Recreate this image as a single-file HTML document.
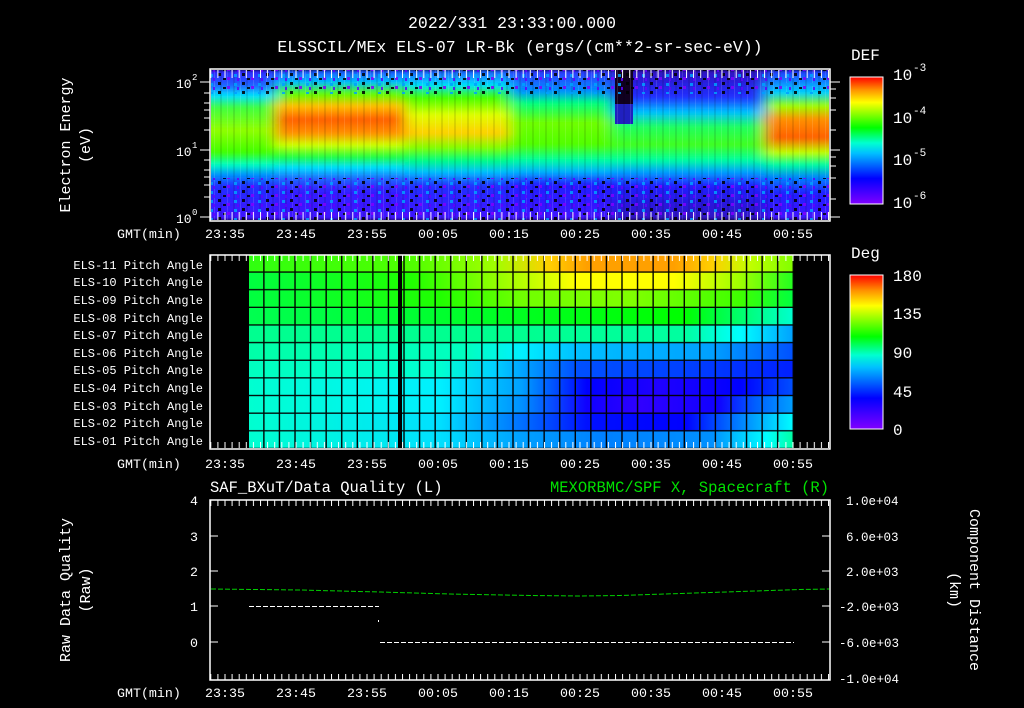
<!DOCTYPE html>
<html><head><meta charset="utf-8"><style>
html,body{margin:0;padding:0;background:#000;width:1024px;height:708px;overflow:hidden}
svg text{font-family:"Liberation Mono",monospace;fill:#fff}
</style></head><body>
<svg width="1024" height="708" viewBox="0 0 1024 708" xmlns="http://www.w3.org/2000/svg">
<defs>
<linearGradient id="cmap" x1="0" y1="1" x2="0" y2="0">
<stop offset="0" stop-color="#8000ff"/><stop offset="0.2" stop-color="#0000ff"/><stop offset="0.4" stop-color="#00c0ff"/><stop offset="0.48" stop-color="#00ffd0"/><stop offset="0.6" stop-color="#00ff00"/><stop offset="0.8" stop-color="#ffff00"/><stop offset="0.9" stop-color="#ff9000"/><stop offset="1" stop-color="#ff0000"/>
</linearGradient>
<linearGradient id="gA" x1="0" y1="0" x2="0" y2="1">
<stop offset="0" stop-color="#3020ff"/><stop offset="0.1" stop-color="#2060ff"/><stop offset="0.17" stop-color="#00e0ff"/><stop offset="0.25" stop-color="#40ff40"/><stop offset="0.4" stop-color="#90ff00"/><stop offset="0.55" stop-color="#40ff00"/><stop offset="0.63" stop-color="#00ffc0"/><stop offset="0.7" stop-color="#0090ff"/><stop offset="0.77" stop-color="#2030ff"/><stop offset="1" stop-color="#4010ff"/>
</linearGradient>
<linearGradient id="gB" x1="0" y1="0" x2="0" y2="1">
<stop offset="0" stop-color="#2040ff"/><stop offset="0.08" stop-color="#00c0ff"/><stop offset="0.16" stop-color="#60ff00"/><stop offset="0.24" stop-color="#ffc000"/><stop offset="0.33" stop-color="#ff6000"/><stop offset="0.42" stop-color="#ff9000"/><stop offset="0.5" stop-color="#d0ff00"/><stop offset="0.58" stop-color="#20ff40"/><stop offset="0.65" stop-color="#00e0ff"/><stop offset="0.73" stop-color="#2060ff"/><stop offset="0.8" stop-color="#3020ff"/><stop offset="1" stop-color="#4010ff"/>
</linearGradient>
<linearGradient id="gC" x1="0" y1="0" x2="0" y2="1">
<stop offset="0" stop-color="#2050ff"/><stop offset="0.1" stop-color="#00e0ff"/><stop offset="0.18" stop-color="#40ff00"/><stop offset="0.3" stop-color="#e0ff00"/><stop offset="0.42" stop-color="#ffd000"/><stop offset="0.52" stop-color="#80ff00"/><stop offset="0.6" stop-color="#00ff80"/><stop offset="0.68" stop-color="#00c0ff"/><stop offset="0.77" stop-color="#2030ff"/><stop offset="1" stop-color="#4010ff"/>
</linearGradient>
<linearGradient id="gD" x1="0" y1="0" x2="0" y2="1">
<stop offset="0" stop-color="#3030ff"/><stop offset="0.14" stop-color="#0090ff"/><stop offset="0.22" stop-color="#00ff80"/><stop offset="0.35" stop-color="#70ff00"/><stop offset="0.5" stop-color="#50ff00"/><stop offset="0.6" stop-color="#00ffa0"/><stop offset="0.68" stop-color="#00b0ff"/><stop offset="0.76" stop-color="#2020ff"/><stop offset="1" stop-color="#4010ff"/>
</linearGradient>
<linearGradient id="gE" x1="0" y1="0" x2="0" y2="1">
<stop offset="0" stop-color="#3010c0"/><stop offset="0.18" stop-color="#2030ff"/><stop offset="0.28" stop-color="#00c0ff"/><stop offset="0.38" stop-color="#20ff60"/><stop offset="0.5" stop-color="#40ff20"/><stop offset="0.6" stop-color="#00ffa0"/><stop offset="0.68" stop-color="#00a0ff"/><stop offset="0.77" stop-color="#2020ff"/><stop offset="1" stop-color="#3010c0"/>
</linearGradient>
<linearGradient id="gF" x1="0" y1="0" x2="0" y2="1">
<stop offset="0" stop-color="#2030ff"/><stop offset="0.15" stop-color="#00d0ff"/><stop offset="0.24" stop-color="#a0ff00"/><stop offset="0.33" stop-color="#ff9000"/><stop offset="0.45" stop-color="#ff6000"/><stop offset="0.55" stop-color="#c0ff00"/><stop offset="0.63" stop-color="#00ffa0"/><stop offset="0.72" stop-color="#0080ff"/><stop offset="0.82" stop-color="#2020ff"/><stop offset="1" stop-color="#4010ff"/>
</linearGradient>
<pattern id="noise" width="24" height="9" patternUnits="userSpaceOnUse">
<rect x="2" y="1" width="3" height="3" fill="#000"/><rect x="11" y="5" width="3" height="3" fill="#8000ff"/><rect x="18" y="2" width="3" height="3" fill="#00a0ff"/><rect x="7" y="6" width="3" height="2" fill="#000"/><rect x="21" y="6" width="2" height="3" fill="#6000ff"/>
</pattern>
<pattern id="streak" width="13" height="150" patternUnits="userSpaceOnUse" x="211" y="70">
<rect x="3" y="0" width="1" height="150" fill="#fff" opacity="0.12"/><rect x="9" y="0" width="2" height="150" fill="#000" opacity="0.1"/>
</pattern>
<filter id="bl" x="0" y="0" width="1" height="1"><feGaussianBlur stdDeviation="7 1.5"/></filter>
<clipPath id="cp1"><rect x="211" y="70" width="618" height="150"/></clipPath>
<pattern id="vlines" width="15.57" height="10" patternUnits="userSpaceOnUse" x="249">
<rect x="14.2" y="0" width="1.4" height="10" fill="#000"/>
</pattern>
<pattern id="hlines" width="10" height="17.64" patternUnits="userSpaceOnUse" y="255">
<rect x="0" y="16.4" width="10" height="1.3" fill="#000"/>
</pattern>
<pattern id="mt" width="7.1" height="10" patternUnits="userSpaceOnUse" x="224.5"><rect x="0" y="0" width="1" height="10" fill="#fff"/></pattern>
<linearGradient id="r11"><stop offset="0" stop-color="#30ff10"/><stop offset="0.3" stop-color="#50ff00"/><stop offset="0.45" stop-color="#a0ff00"/><stop offset="0.55" stop-color="#ffd000"/><stop offset="0.62" stop-color="#ffa000"/><stop offset="0.78" stop-color="#ffa000"/><stop offset="0.85" stop-color="#ffd000"/><stop offset="0.92" stop-color="#c0ff00"/><stop offset="1" stop-color="#80ff00"/></linearGradient>
<linearGradient id="r10"><stop offset="0" stop-color="#00ff40"/><stop offset="0.3" stop-color="#20ff00"/><stop offset="0.45" stop-color="#90ff00"/><stop offset="0.6" stop-color="#ffff00"/><stop offset="0.78" stop-color="#ffff00"/><stop offset="0.9" stop-color="#a0ff00"/><stop offset="1" stop-color="#20ff20"/></linearGradient>
<linearGradient id="r9"><stop offset="0" stop-color="#00ff40"/><stop offset="0.35" stop-color="#20ff00"/><stop offset="0.5" stop-color="#70ff00"/><stop offset="0.7" stop-color="#80ff00"/><stop offset="0.9" stop-color="#40ff00"/><stop offset="1" stop-color="#00ff40"/></linearGradient>
<linearGradient id="r8"><stop offset="0" stop-color="#00ff50"/><stop offset="0.5" stop-color="#00ff20"/><stop offset="0.8" stop-color="#00ff00"/><stop offset="0.92" stop-color="#00ff80"/><stop offset="1" stop-color="#00ffd0"/></linearGradient>
<linearGradient id="r7"><stop offset="0" stop-color="#00ff90"/><stop offset="0.5" stop-color="#00ff90"/><stop offset="0.8" stop-color="#00ffa0"/><stop offset="0.9" stop-color="#00ffff"/><stop offset="1" stop-color="#00a0ff"/></linearGradient>
<linearGradient id="r6"><stop offset="0" stop-color="#00ffa8"/><stop offset="0.4" stop-color="#00ffc0"/><stop offset="0.5" stop-color="#00f0ff"/><stop offset="0.6" stop-color="#00c0ff"/><stop offset="0.85" stop-color="#00a0ff"/><stop offset="1" stop-color="#0050ff"/></linearGradient>
<linearGradient id="r5"><stop offset="0" stop-color="#00ffc0"/><stop offset="0.35" stop-color="#00ffd0"/><stop offset="0.45" stop-color="#00d0ff"/><stop offset="0.6" stop-color="#0050ff"/><stop offset="0.8" stop-color="#0040ff"/><stop offset="1" stop-color="#0020ff"/></linearGradient>
<linearGradient id="r4"><stop offset="0" stop-color="#00ffd0"/><stop offset="0.35" stop-color="#00f0ff"/><stop offset="0.5" stop-color="#00a0ff"/><stop offset="0.62" stop-color="#0000ff"/><stop offset="0.75" stop-color="#2000ff"/><stop offset="0.9" stop-color="#0000ff"/><stop offset="1" stop-color="#0050ff"/></linearGradient>
<linearGradient id="r3"><stop offset="0" stop-color="#00ffd0"/><stop offset="0.35" stop-color="#00f0ff"/><stop offset="0.5" stop-color="#0090ff"/><stop offset="0.62" stop-color="#1000ff"/><stop offset="0.72" stop-color="#3000ff"/><stop offset="0.86" stop-color="#1000ff"/><stop offset="0.93" stop-color="#0060ff"/><stop offset="1" stop-color="#00a0ff"/></linearGradient>
<linearGradient id="r2"><stop offset="0" stop-color="#00ffd0"/><stop offset="0.35" stop-color="#00e0ff"/><stop offset="0.5" stop-color="#0070ff"/><stop offset="0.62" stop-color="#0010ff"/><stop offset="0.8" stop-color="#0000ff"/><stop offset="0.9" stop-color="#0080ff"/><stop offset="1" stop-color="#00ffff"/></linearGradient>
<linearGradient id="r1"><stop offset="0" stop-color="#00ffd0"/><stop offset="0.35" stop-color="#00e0ff"/><stop offset="0.5" stop-color="#00a0ff"/><stop offset="0.65" stop-color="#0080ff"/><stop offset="0.85" stop-color="#0090ff"/><stop offset="0.95" stop-color="#00ffff"/><stop offset="1" stop-color="#00ffa0"/></linearGradient>
</defs>

<!-- titles -->
<text x="512" y="28" font-size="16.5" text-anchor="middle">2022/331 23:33:00.000</text>
<text x="520" y="52" font-size="16.5" text-anchor="middle">ELSSCIL/MEx ELS-07 LR-Bk  (ergs/(cm**2-sr-sec-eV))</text>

<!-- top spectrogram -->
<g clip-path="url(#cp1)">
<g filter="url(#bl)">
<rect x="190" y="70" width="85" height="150" fill="url(#gA)"/>
<rect x="275" y="70" width="130" height="150" fill="url(#gB)"/>
<rect x="405" y="70" width="105" height="150" fill="url(#gC)"/>
<rect x="510" y="70" width="102" height="150" fill="url(#gD)"/>
<rect x="612" y="70" width="26" height="150" fill="url(#gE)"/>
<rect x="638" y="70" width="127" height="150" fill="url(#gE)"/>
<rect x="765" y="70" width="80" height="150" fill="url(#gF)"/>
</g>
<rect x="615" y="70" width="18" height="34" fill="#100020"/>
<rect x="615" y="104" width="18" height="20" fill="#2020c0"/>
<rect x="211" y="70" width="618" height="150" fill="url(#streak)"/>
<rect x="211" y="70" width="618" height="24" fill="url(#noise)" opacity="0.85"/>
<rect x="211" y="178" width="618" height="42" fill="url(#noise)" opacity="0.85"/>
</g>
<rect x="210" y="69" width="620" height="152" fill="none" stroke="#fff" stroke-width="1.5"/>
<rect x="210" y="70" width="620" height="8" fill="url(#mt)"/>
<rect x="210" y="212" width="620" height="8" fill="url(#mt)"/>
<g stroke="#fff" stroke-width="1">
<line x1="200" y1="82" x2="210" y2="82"/><line x1="200" y1="150" x2="210" y2="150"/><line x1="200" y1="217" x2="210" y2="217"/>
<line x1="204" y1="197" x2="210" y2="197"/><line x1="204" y1="185" x2="210" y2="185"/><line x1="204" y1="177" x2="210" y2="177"/><line x1="204" y1="170" x2="210" y2="170"/><line x1="204" y1="160" x2="210" y2="160"/>
<line x1="204" y1="130" x2="210" y2="130"/><line x1="204" y1="118" x2="210" y2="118"/><line x1="204" y1="110" x2="210" y2="110"/><line x1="204" y1="103" x2="210" y2="103"/><line x1="204" y1="93" x2="210" y2="93"/>
<line x1="830" y1="82" x2="840" y2="82"/><line x1="830" y1="150" x2="840" y2="150"/><line x1="830" y1="217" x2="840" y2="217"/>
<line x1="830" y1="199" x2="836" y2="199"/><line x1="830" y1="178" x2="836" y2="178"/><line x1="830" y1="166" x2="836" y2="166"/><line x1="830" y1="157" x2="836" y2="157"/>
<line x1="830" y1="130" x2="836" y2="130"/><line x1="830" y1="110" x2="836" y2="110"/><line x1="830" y1="98" x2="836" y2="98"/><line x1="830" y1="89" x2="836" y2="89"/>
</g>
<text x="176" y="88" font-size="13">10</text><text x="192" y="80" font-size="9">2</text>
<text x="176" y="156" font-size="13">10</text><text x="192" y="148" font-size="9">1</text>
<text x="176" y="223" font-size="13">10</text><text x="192" y="215" font-size="9">0</text>
<text transform="translate(70,145) rotate(-90)" font-size="15" text-anchor="middle">Electron Energy</text>
<text transform="translate(90,145) rotate(-90)" font-size="15" text-anchor="middle">(eV)</text>
<!-- DEF colorbar -->
<text x="851" y="60" font-size="16">DEF</text>
<rect x="850" y="77" width="33" height="127" fill="url(#cmap)" stroke="#fff" stroke-width="1"/>
<text x="893" y="80" font-size="16">10</text><text x="913" y="71" font-size="11">-3</text>
<text x="893" y="123" font-size="16">10</text><text x="913" y="114" font-size="11">-4</text>
<text x="893" y="165" font-size="16">10</text><text x="913" y="156" font-size="11">-5</text>
<text x="893" y="208" font-size="16">10</text><text x="913" y="199" font-size="11">-6</text>

<g font-size="13.3">
<text x="117" y="238">GMT(min)</text>
<text x="225" y="238" text-anchor="middle">23:35</text><text x="296" y="238" text-anchor="middle">23:45</text><text x="367" y="238" text-anchor="middle">23:55</text><text x="438" y="238" text-anchor="middle">00:05</text><text x="509" y="238" text-anchor="middle">00:15</text><text x="580" y="238" text-anchor="middle">00:25</text><text x="651" y="238" text-anchor="middle">00:35</text><text x="722" y="238" text-anchor="middle">00:45</text><text x="793" y="238" text-anchor="middle">00:55</text>
<text x="117" y="468">GMT(min)</text>
<text x="225" y="468" text-anchor="middle">23:35</text><text x="296" y="468" text-anchor="middle">23:45</text><text x="367" y="468" text-anchor="middle">23:55</text><text x="438" y="468" text-anchor="middle">00:05</text><text x="509" y="468" text-anchor="middle">00:15</text><text x="580" y="468" text-anchor="middle">00:25</text><text x="651" y="468" text-anchor="middle">00:35</text><text x="722" y="468" text-anchor="middle">00:45</text><text x="793" y="468" text-anchor="middle">00:55</text>
<text x="117" y="697">GMT(min)</text>
<text x="225" y="697" text-anchor="middle">23:35</text><text x="296" y="697" text-anchor="middle">23:45</text><text x="367" y="697" text-anchor="middle">23:55</text><text x="438" y="697" text-anchor="middle">00:05</text><text x="509" y="697" text-anchor="middle">00:15</text><text x="580" y="697" text-anchor="middle">00:25</text><text x="651" y="697" text-anchor="middle">00:35</text><text x="722" y="697" text-anchor="middle">00:45</text><text x="793" y="697" text-anchor="middle">00:55</text>
</g>

<!-- middle pitch angle panel -->
<rect x="249" y="255" width="545" height="17.64" fill="url(#r11)"/>
<rect x="249" y="272.64" width="545" height="17.64" fill="url(#r10)"/>
<rect x="249" y="290.28" width="545" height="17.64" fill="url(#r9)"/>
<rect x="249" y="307.92" width="545" height="17.64" fill="url(#r8)"/>
<rect x="249" y="325.56" width="545" height="17.64" fill="url(#r7)"/>
<rect x="249" y="343.2" width="545" height="17.64" fill="url(#r6)"/>
<rect x="249" y="360.84" width="545" height="17.64" fill="url(#r5)"/>
<rect x="249" y="378.48" width="545" height="17.64" fill="url(#r4)"/>
<rect x="249" y="396.12" width="545" height="17.64" fill="url(#r3)"/>
<rect x="249" y="413.76" width="545" height="17.64" fill="url(#r2)"/>
<rect x="249" y="431.4" width="545" height="17.6" fill="url(#r1)"/>
<rect x="249" y="255" width="545" height="194" fill="url(#vlines)"/>
<rect x="249" y="255" width="545" height="194" fill="url(#hlines)"/>
<rect x="398" y="255" width="4" height="194" fill="#000"/>
<rect x="210" y="255" width="620" height="194" fill="none" stroke="#fff" stroke-width="1.5"/>
<rect x="210" y="255" width="620" height="6" fill="url(#mt)"/>
<rect x="210" y="442" width="620" height="6" fill="url(#mt)"/>
<g font-size="12" text-anchor="end">
<text x="203" y="269">ELS-11 Pitch Angle</text><text x="203" y="286">ELS-10 Pitch Angle</text><text x="203" y="304">ELS-09 Pitch Angle</text><text x="203" y="322">ELS-08 Pitch Angle</text><text x="203" y="339">ELS-07 Pitch Angle</text><text x="203" y="357">ELS-06 Pitch Angle</text><text x="203" y="374">ELS-05 Pitch Angle</text><text x="203" y="392">ELS-04 Pitch Angle</text><text x="203" y="410">ELS-03 Pitch Angle</text><text x="203" y="427">ELS-02 Pitch Angle</text><text x="203" y="445">ELS-01 Pitch Angle</text>
</g>
<text x="851" y="258" font-size="16">Deg</text>
<rect x="850" y="275" width="33" height="154" fill="url(#cmap)" stroke="#fff" stroke-width="1"/>
<g font-size="16"><text x="893" y="281">180</text><text x="893" y="319">135</text><text x="893" y="358">90</text><text x="893" y="397">45</text><text x="893" y="435">0</text></g>

<!-- bottom panel -->
<text x="210" y="492" font-size="15.5">SAF_BXuT/Data Quality (L)</text>
<text x="829" y="492" font-size="15.5" text-anchor="end" style="fill:#00e000">MEXORBMC/SPF X, Spacecraft (R)</text>
<rect x="210" y="500" width="620" height="180" fill="none" stroke="#fff" stroke-width="1.5"/>
<rect x="210" y="500" width="620" height="6" fill="url(#mt)"/>
<rect x="210" y="674" width="620" height="6" fill="url(#mt)"/>
<g stroke="#fff" stroke-width="1">
<line x1="210" y1="536" x2="218" y2="536"/><line x1="210" y1="571" x2="218" y2="571"/><line x1="210" y1="606" x2="218" y2="606"/><line x1="210" y1="642" x2="218" y2="642"/>
<line x1="822" y1="536" x2="830" y2="536"/><line x1="822" y1="571" x2="830" y2="571"/><line x1="822" y1="606" x2="830" y2="606"/><line x1="822" y1="642" x2="830" y2="642"/>
</g>
<g font-size="13.3" text-anchor="end"><text x="198" y="505">4</text><text x="198" y="541">3</text><text x="198" y="576">2</text><text x="198" y="611">1</text><text x="198" y="647">0</text></g>
<g font-size="12.5"><text x="846" y="505">1.0e+04</text><text x="846" y="541">6.0e+03</text><text x="846" y="576">2.0e+03</text><text x="839" y="611">-2.0e+03</text><text x="839" y="647">-6.0e+03</text><text x="839" y="683">-1.0e+04</text></g>
<line x1="249" y1="606.5" x2="379" y2="606.5" stroke="#fff" stroke-width="1" stroke-dasharray="5,2"/>
<line x1="380" y1="642.5" x2="794" y2="642.5" stroke="#fff" stroke-width="1" stroke-dasharray="5,2"/>
<rect x="378" y="620" width="1" height="2" fill="#fff"/>
<polyline points="211,589 300,590 380,592 450,594 530,595.5 580,596 620,595.5 680,593.5 740,591.5 800,589.5 829,589" fill="none" stroke="#00d000" stroke-width="1" stroke-dasharray="5,2"/>
<text transform="translate(70,590) rotate(-90)" font-size="15" text-anchor="middle">Raw Data Quality</text>
<text transform="translate(90,590) rotate(-90)" font-size="15" text-anchor="middle">(Raw)</text>
<text transform="translate(970,590) rotate(90)" font-size="15" text-anchor="middle">Component Distance</text>
<text transform="translate(950,590) rotate(90)" font-size="15" text-anchor="middle">(km)</text>
</svg>
</body></html>
